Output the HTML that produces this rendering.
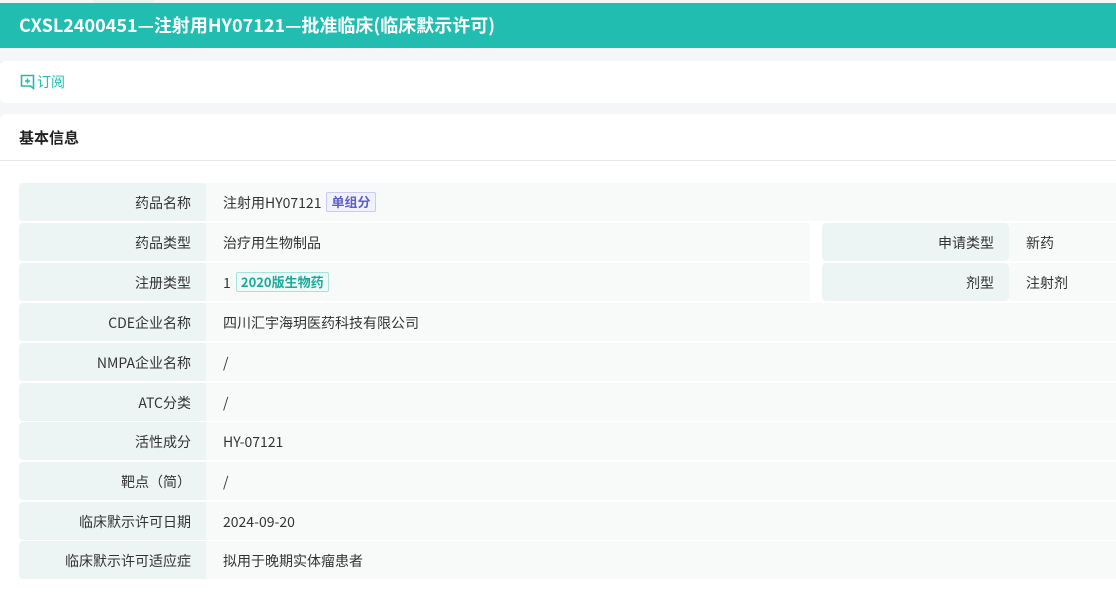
<!DOCTYPE html>
<html><head><meta charset="utf-8"><style>
*{margin:0;padding:0;box-sizing:border-box}
body{width:1116px;height:587px;overflow:hidden;background:#f5f6f8;font-family:"Noto Sans CJK SC","Liberation Sans",sans-serif;position:relative}
.tab{position:absolute;left:93px;top:0;width:61px;height:3px;background:#e6f4f2}
.hdr{position:absolute;left:0;top:3px;width:1116px;height:45px;background:#20bdb0;color:#fff;font-weight:bold;font-size:18px;line-height:45px;padding-left:19px}
.c1{position:absolute;left:0;top:61px;width:1116px;height:42px;background:#fff;border-radius:6px 0 0 6px}
.sub{position:absolute;left:20px;top:72px;font-size:14px;color:#20bdb0;line-height:20px;display:flex;align-items:center}
.c2{position:absolute;left:0;top:114px;width:1116px;height:480px;background:#fff;border-radius:6px 0 0 0}
.ttl{position:absolute;left:19px;top:128px;font-size:15px;font-weight:bold;color:#222;line-height:20px}
.ln{position:absolute;left:0;top:160px;width:1116px;height:1px;background:#e6e8ea}
.row{position:absolute;left:19px;height:38px;width:1097px;font-size:14px;color:#333;line-height:40px}
.l{position:absolute;left:0;top:0;width:187px;height:38px;background:#edf5f4;text-align:right;padding-right:15px;border-radius:4px 0 0 4px}
.v{position:absolute;left:187px;top:0;right:0;height:38px;background:#f8fafa;padding-left:17px}
.tag{display:inline-block;font-size:13px;line-height:18px;padding:0 4px;border:1px solid;border-radius:2px;margin-left:5px;font-weight:bold;vertical-align:1px}
</style></head><body>
<div class="tab"></div>
<div class="hdr">CXSL2400451—注射用HY07121—批准临床(临床默示许可)</div>
<div class="c1"></div>
<div class="sub"><svg width="15" height="16" viewBox="0 0 15 16" style="margin-right:2px"><path d="M1.5 1.5h12v13l-3-2.5h-9z" fill="none" stroke="#20bdb0" stroke-width="1.6"/><path d="M7.5 4.5v5M5 7h5" stroke="#20bdb0" stroke-width="1.6"/></svg>订阅</div>
<div class="c2"></div>
<div class="ttl">基本信息</div>
<div class="ln"></div>

<div class="row" style="top:183px"><div class="l">药品名称</div><div class="v">注射用HY07121<span class="tag" style="color:#5b5fc7;border-color:#c9cbf0;background:#f1f1fc">单组分</span></div></div>
<div class="row" style="top:223px"><div class="l">药品类型</div><div class="v" style="right:306px">治疗用生物制品</div>
 <div class="l" style="left:803px;border-radius:4px">申请类型</div><div class="v" style="left:990px">新药</div></div>
<div class="row" style="top:263px"><div class="l">注册类型</div><div class="v" style="right:306px">1 <span class="tag" style="color:#1aa99c;border-color:#a6e3dd;background:#effaf8;margin-left:2px">2020版生物药</span></div>
 <div class="l" style="left:803px;border-radius:4px">剂型</div><div class="v" style="left:990px">注射剂</div></div>
<div class="row" style="top:303px"><div class="l">CDE企业名称</div><div class="v">四川汇宇海玥医药科技有限公司</div></div>
<div class="row" style="top:343px"><div class="l">NMPA企业名称</div><div class="v">/</div></div>
<div class="row" style="top:383px"><div class="l">ATC分类</div><div class="v">/</div></div>
<div class="row" style="top:422px"><div class="l">活性成分</div><div class="v">HY-07121</div></div>
<div class="row" style="top:462px"><div class="l">靶点（简）</div><div class="v">/</div></div>
<div class="row" style="top:502px"><div class="l">临床默示许可日期</div><div class="v">2024-09-20</div></div>
<div class="row" style="top:541px"><div class="l">临床默示许可适应症</div><div class="v">拟用于晚期实体瘤患者</div></div>
</body></html>
